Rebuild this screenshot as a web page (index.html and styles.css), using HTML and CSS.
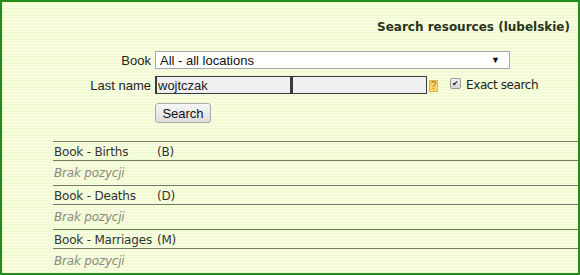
FILE: index.html
```html
<!DOCTYPE html>
<html lang="pl">
<head>
  <meta charset="UTF-8" />
  <title>Search resources</title>
  <link rel="stylesheet" href="styles.css">
</head>
<body>
  <div class="ramka">
    <h1 class="tytul">Search resources (lubelskie)</h1>

    <form class="szukaj">
      <label class="etykieta">Book</label>
      <div class="wybor">
        <select>
          <option>All - all locations</option>
        </select>
        <span class="strzalka">&#9660;</span>
      </div>

      <label class="etykieta">Last name</label>
      <div class="linia">
        <input type="text" class="pole" value="wojtczak">
        <input type="text" class="pole">
        <span class="pomoc">?</span>
        <span class="zaznacz">&#10004;</span>
        <span class="dokladne">Exact search</span>
      </div>

      <span></span>
      <div>
        <button type="button" class="przycisk">Search</button>
      </div>
    </form>

    <table class="wyniki">
      <tr class="ksiega"><td class="nazwa">Book - Births</td><td>(B)</td></tr>
      <tr class="brak"><td colspan="2">Brak pozycji</td></tr>
      <tr class="ksiega"><td class="nazwa">Book - Deaths</td><td>(D)</td></tr>
      <tr class="brak"><td colspan="2">Brak pozycji</td></tr>
      <tr class="ksiega"><td class="nazwa">Book - Marriages</td><td>(M)</td></tr>
      <tr class="brak"><td colspan="2">Brak pozycji</td></tr>
    </table>
  </div>
</body>
</html>
```

FILE: styles.css
```css
* {
  margin: 0;
  padding: 0;
  box-sizing: border-box;
}

body {
  font-family: 'DejaVu Sans', Verdana, sans-serif;
  font-size: 12px;
  color: #333333;
}

.ramka {
  width: 580px;
  height: 275px;
  border: 2px solid #238b1c;
  background: repeating-linear-gradient(to bottom, #f1fbd3 0px, #f1fbd3 2px, #fafee6 2px, #fafee6 3px);
  display: flex;
  flex-direction: column;
  overflow: hidden;
}

.ramka > * {
  flex-shrink: 0;
}

.tytul {
  font-size: 12px;
  font-weight: bold;
  color: #2b3320;
  text-align: right;
  padding: 18px 8px 0 0;
  height: 49px;
}

.szukaj {
  display: grid;
  grid-template-columns: 149px auto;
  column-gap: 4px;
  row-gap: 7px;
  align-items: center;
  font-family: 'Liberation Sans', Arial, sans-serif;
  font-size: 13px;
  color: #222222;
}

.etykieta {
  text-align: right;
}

.wybor {
  position: relative;
  width: 355px;
}

.wybor select {
  appearance: none;
  width: 100%;
  height: 18px;
  border: 1px solid #a9a9a9;
  background-color: #ffffff;
  font-family: 'Liberation Sans', Arial, sans-serif;
  font-size: 13px;
  color: #111111;
  padding: 0 0 0 4px;
  border-radius: 0;
}

.strzalka {
  position: absolute;
  right: 10px;
  top: 4px;
  font-size: 9px;
  color: #111111;
  pointer-events: none;
}

.linia {
  display: flex;
  align-items: center;
  height: 18px;
}

.pole {
  width: 136px;
  height: 18px;
  background-color: #f0f0f0;
  border: 1px solid #3a3a3a;
  border-left-width: 2px;
  font-family: 'Liberation Sans', Arial, sans-serif;
  font-size: 13px;
  color: #222222;
  padding: 0 1px;
}

.pomoc {
  width: 9px;
  height: 12px;
  margin-left: 2px;
  margin-top: 1px;
  background-color: #f6d56d;
  border: 1px solid #e3b44a;
  color: #c0661a;
  font-size: 10px;
  line-height: 10px;
  text-align: center;
}

.zaznacz {
  width: 11px;
  height: 11px;
  margin-left: 12px;
  margin-top: -4px;
  border: 1px solid #9a9a9a;
  border-radius: 2px;
  background: linear-gradient(#f2f2f2, #d6d6d6);
  color: #222222;
  font-size: 8px;
  line-height: 10px;
  text-align: center;
}

.dokladne {
  font-family: 'DejaVu Sans', Verdana, sans-serif;
  font-size: 12px;
  letter-spacing: -0.4px;
  margin-left: 5px;
  color: #222222;
}

.przycisk {
  width: 56px;
  height: 20px;
  margin-top: 2px;
  border: 1px solid #acacac;
  border-radius: 3px;
  background: linear-gradient(#f6f6f6, #dedede);
  font-family: 'Liberation Sans', Arial, sans-serif;
  font-size: 13px;
  color: #111111;
}

.wyniki {
  margin: 18px 0 0 51px;
  width: calc(100% - 51px);
  border-collapse: collapse;
  letter-spacing: -0.2px;
}

.wyniki td {
  padding: 0 0 0 1px;
  white-space: nowrap;
}

.ksiega td {
  height: 19px;
  padding-top: 2px;
  border-top: 1px solid #737b63;
  border-bottom: 1px solid #737b63;
  color: #333333;
}

.ksiega .nazwa {
  width: 102px;
  padding-right: 4px;
}

.brak td {
  height: 25px;
  font-style: italic;
  color: #8a8a80;
}
```
